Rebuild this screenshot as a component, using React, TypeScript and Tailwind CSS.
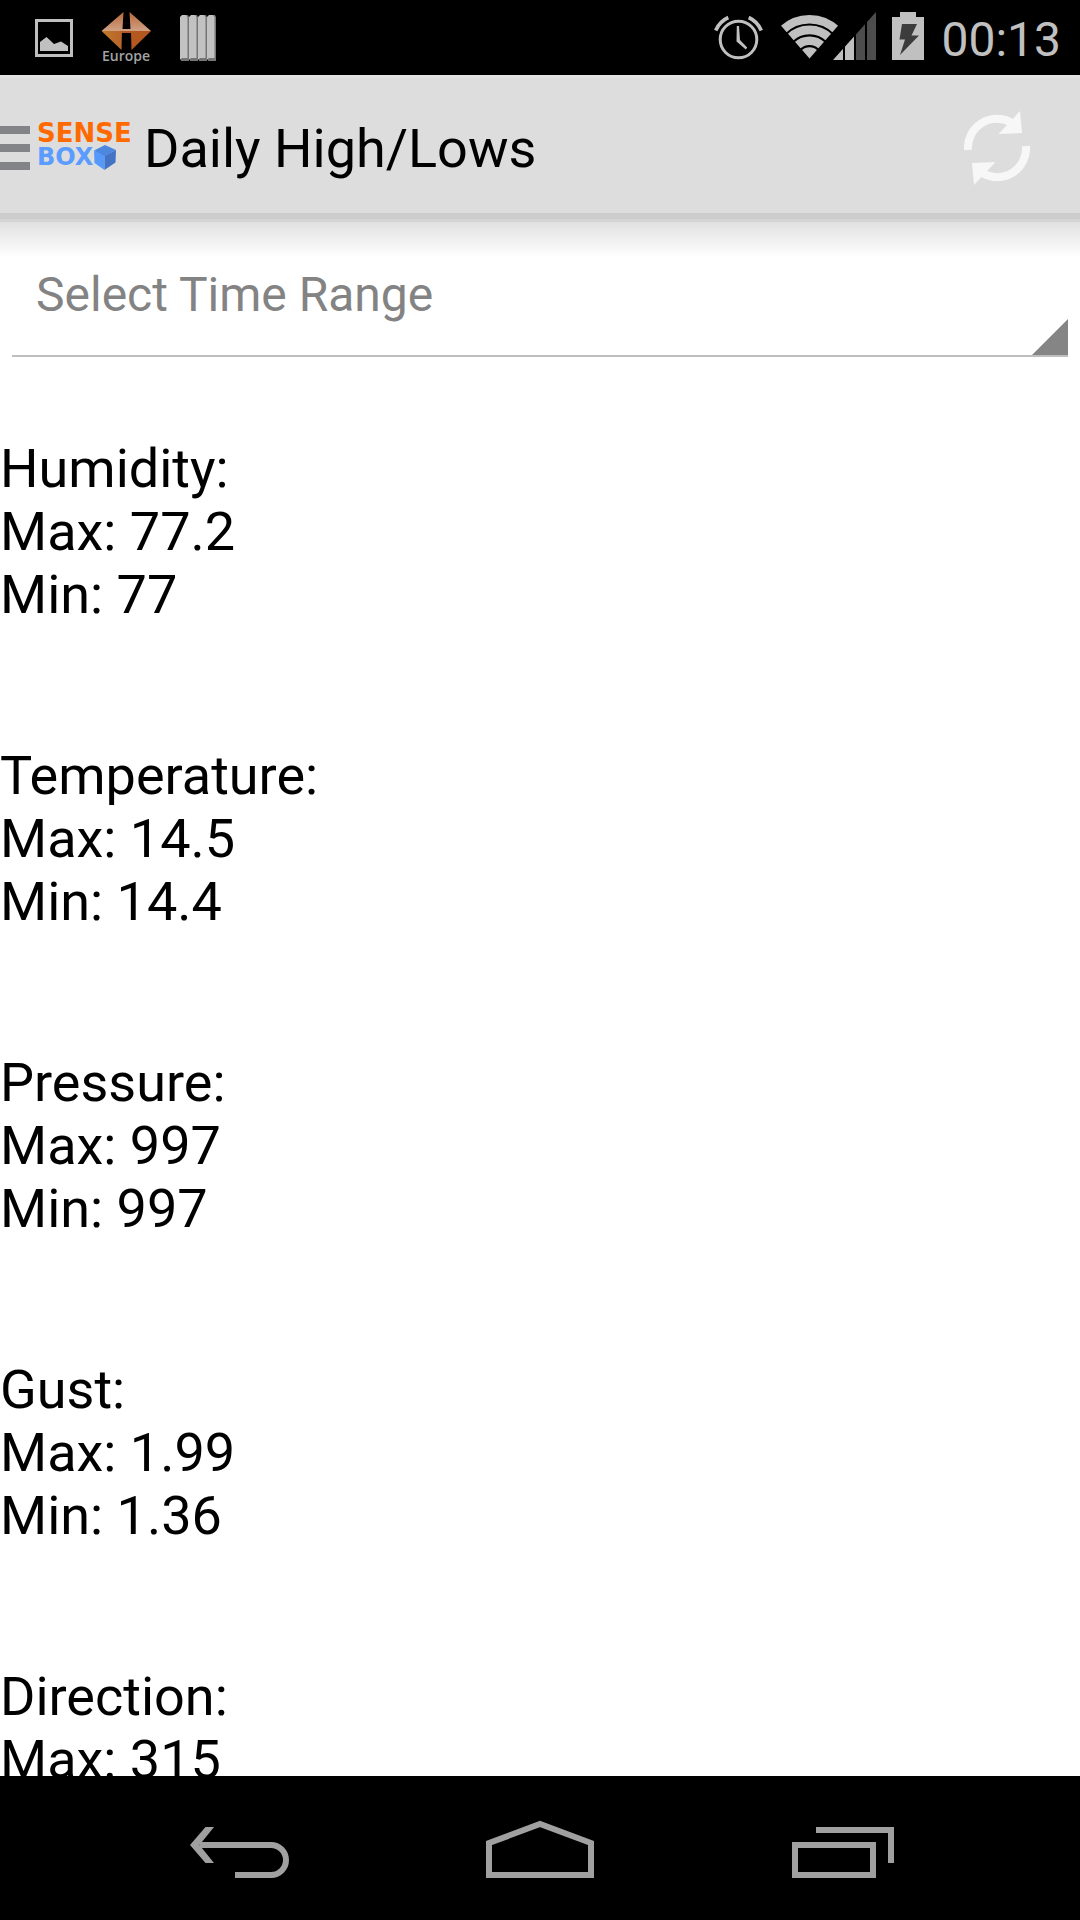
import React from "react";

const readings = [
  { name: "Humidity", values: [["Max", "77.2"], ["Min", "77"]] },
  { name: "Temperature", values: [["Max", "14.5"], ["Min", "14.4"]] },
  { name: "Pressure", values: [["Max", "997"], ["Min", "997"]] },
  { name: "Gust", values: [["Max", "1.99"], ["Min", "1.36"]] },
  { name: "Direction", values: [["Max", "315"]] },
];

function PictureIcon() {
  return (
    <svg className="h-[75px] w-[38px]" viewBox="35 0 38 75" aria-hidden="true">
      <rect x="36.5" y="20.5" width="35" height="35" fill="none" stroke="#c0c0c0" strokeWidth="3" />
      <path d="M40 51V42L46.500 37L54 44L61 41.500L68 46V51Z" fill="#c0c0c0" />
    </svg>
  );
}

function EuropeIcon() {
  return (
    <div className="flex w-[50px] flex-col items-center pt-3">
      <svg className="h-[37px] w-[50px] overflow-visible" viewBox="101 12 50 37" aria-hidden="true">
        <defs>
          <linearGradient id="topHalf" x1="0" y1="0" x2="0" y2="1">
            <stop offset="0" stopColor="#b9683a" />
            <stop offset="1" stopColor="#d0a184" />
          </linearGradient>
          <linearGradient id="lowLeft" x1="0" y1="0" x2="1" y2="0">
            <stop offset="0" stopColor="#c07a28" />
            <stop offset="1" stopColor="#b8642a" />
          </linearGradient>
        </defs>
        <path d="M101.500 31L123.500 12L122.500 29H130.500L129.500 12L151 31Z" fill="url(#topHalf)" />
        <path d="M101.500 31H122L121.500 50Z" fill="url(#lowLeft)" />
        <path d="M121 31H151L131.500 50L131 33H122Z" fill="#b4581f" />
      </svg>
      <span className="font-['Open_Sans',sans-serif] text-[14px] leading-[14px] font-semibold text-[#a3a3a3]">
        Europe
      </span>
    </div>
  );
}

function SlatsIcon() {
  return (
    <svg className="h-[75px] w-[36px]" viewBox="180 0 36 75" aria-hidden="true">
      {[180, 189, 198, 207].map((x) => (
        <g key={x}>
          <path d={`M${x + 2} 15h6l1 2v44h-8z`} fill="#757575" />
          <path d={`M${x} 17l2 -2h4l1.500 2v41h-5.500l-2 2z`} fill="#c2c2c2" />
        </g>
      ))}
    </svg>
  );
}

function AlarmIcon() {
  return (
    <svg className="h-[75px] w-[52px]" viewBox="714 0 52 75" fill="none" stroke="#c0c0c0" aria-hidden="true">
      <circle cx="738.5" cy="39.500" r="18.300" strokeWidth="3" />
      <path d="M715.700 30.500Q719.500 21.500 728.300 17.500M761.300 30.500Q757.500 21.500 748.700 17.500" strokeWidth="3.600" />
      <path d="M736.800 26H739L740 40L747.200 47.500L745.800 49.500L736.500 41.500Z" fill="#c0c0c0" stroke="none" />
    </svg>
  );
}

function NetworkIcon() {
  return (
    <svg className="h-[75px] w-[98px]" viewBox="780 0 98 75" aria-hidden="true">
      <defs>
        <clipPath id="wedge">
          <path d="M809.500 58.500L779.500 24V10H839.500V24Z" />
        </clipPath>
        <clipPath id="ramp">
          <path d="M833 60L876 12V60Z" />
        </clipPath>
      </defs>
      <g clipPath="url(#wedge)" fill="none" stroke="#c0c0c0" strokeWidth="8.600">
        <circle cx="809.500" cy="58.500" r="39.300" />
        <circle cx="809.500" cy="58.500" r="28.600" />
        <circle cx="809.500" cy="58.500" r="17.800" />
        <circle cx="809.500" cy="58.500" r="5.600" strokeWidth="11.200" />
      </g>
      <g clipPath="url(#ramp)">
        <rect x="833" y="10" width="10" height="50" fill="#c0c0c0" />
        <rect x="845" y="10" width="9" height="50" fill="#c0c0c0" />
        <rect x="856" y="10" width="9" height="50" fill="#4d4d4d" />
        <rect x="867" y="10" width="9" height="50" fill="#4d4d4d" />
      </g>
    </svg>
  );
}

function BatteryIcon() {
  return (
    <svg className="h-[75px] w-[35px]" viewBox="892 0 35 75" aria-hidden="true">
      <path d="M892 17H900V12H916V17H924V60H892Z" fill="#c0c0c0" />
      <path d="M902 24H917L911.500 35.500H919L900 55L905 39.500H899.500Z" fill="#3c3c3c" />
    </svg>
  );
}

function Logo() {
  return (
    <span className="flex w-[95px] flex-col items-start pb-1 font-['DejaVu_Sans',sans-serif] leading-[23px] font-bold">
      <span className="text-[26px] text-[#ff6a00]">SENSE</span>
      <span className="flex items-center text-[24px] text-[#5a9cff]">
        BOX
        <svg className="h-[25px] w-[24px] shrink-0" viewBox="96 144 24 25" aria-hidden="true">
          <path d="M108 144L119 149L107 155.500L97 149.500Z" fill="#4c87e0" />
          <path d="M97 149.500L107.500 155V169L97.500 162Z" fill="#5599fb" />
          <path d="M107.500 155L119 149L118.500 161.500L107.500 169Z" fill="#4273c4" />
        </svg>
      </span>
    </span>
  );
}

export default function App() {
  return (
    <div className="flex h-screen flex-col overflow-hidden bg-white font-[Roboto,sans-serif] text-black">
      <div className="flex h-[75px] shrink-0 justify-between bg-black">
        <div className="flex pl-[35px]">
          <PictureIcon />
          <div className="w-7" />
          <EuropeIcon />
          <div className="w-[29px]" />
          <SlatsIcon />
        </div>
        <div className="flex pr-[19px]">
          <AlarmIcon />
          <div className="w-[14px]" />
          <NetworkIcon />
          <div className="w-[14px]" />
          <BatteryIcon />
          <time className="ml-[14px] pt-3 text-[48px] leading-[56px] text-[#c0c0c0]">00:13</time>
        </div>
      </div>

      <header className="relative z-10 flex h-[147px] shrink-0 items-center border-t-3 border-[#e2e2e2] bg-[#ddd] pr-[50px] pb-1">
        <button type="button" aria-label="Open navigation" className="flex items-center">
          <svg className="h-[45px] w-[37px]" viewBox="0 127 37 45" fill="#838488" aria-hidden="true">
            <path d="M0 127H30V135H0ZM0 145H30V153H0ZM0 163H30V171H0Z" />
          </svg>
          <Logo />
        </button>
        <h1 className="ml-3 flex-1 text-[54px] leading-[63px]">Daily High/Lows</h1>
        <button type="button" aria-label="Refresh">
          <svg className="h-[74px] w-[66px]" viewBox="964 110 66 74" aria-hidden="true">
            <g id="refreshArrow">
              <path d="M968 149A29 29 0 0 1 1011 121.500" fill="none" stroke="#f7f7f7" strokeWidth="8" />
              <path d="M1020 110L1022 132L998.500 133Z" fill="#f7f7f7" />
            </g>
            <use href="#refreshArrow" transform="rotate(180 997 147)" />
          </svg>
        </button>
        <div className="absolute inset-x-0 bottom-0 h-[9px] border-b-3 border-[#d4d4d4] bg-[#ccc]" />
        <div className="pointer-events-none absolute inset-x-0 top-full h-[36px] bg-linear-to-b from-black/12 to-black/0" />
      </header>

      <main className="min-h-0 flex-1 overflow-y-auto [scrollbar-width:none]">
        <div className="relative mx-3 mt-[9px]">
          <select
            aria-label="Select Time Range"
            defaultValue=""
            className="block h-[126px] w-full appearance-none border-b-2 border-[#bebebe] bg-transparent pt-1 pl-6 text-[48px] leading-[56px] text-[#838383] outline-none"
          >
            <option value="">Select Time Range</option>
            <option value="day">Day</option>
          </select>
          <svg
            className="pointer-events-none absolute right-0 bottom-[2px] size-9"
            viewBox="0 0 36 36"
            fill="#858585"
            aria-hidden="true"
          >
            <path d="M36 0V36H0Z" />
          </svg>
        </div>

        <div className="flex flex-col gap-[118px] pt-20 text-[54px] leading-[63px]">
          {readings.map((r) => (
            <section key={r.name}>
              <h2>{r.name}:</h2>
              {r.values.map(([label, value]) => (
                <p key={label}>
                  {label}: {value}
                </p>
              ))}
            </section>
          ))}
        </div>
      </main>

      <nav className="grid h-36 shrink-0 grid-cols-3 bg-black px-[90px]">
        <button type="button" aria-label="Back" className="flex justify-center">
          <svg className="h-36 w-[100px]" viewBox="190 1776 100 144" aria-hidden="true">
            <path d="M200 1845H271A15 15 0 0 1 271 1875H235" fill="none" stroke="#a0a0a0" strokeWidth="6" />
            <path d="M190 1845L205.500 1827H214L199.500 1845L214 1863H205.500Z" fill="#a0a0a0" />
          </svg>
        </button>
        <button type="button" aria-label="Home" className="flex justify-center">
          <svg className="h-36 w-[108px]" viewBox="486 1776 108 144" aria-hidden="true">
            <path d="M489 1843L540 1824L591 1843V1875H489Z" fill="none" stroke="#a0a0a0" strokeWidth="6" />
          </svg>
        </button>
        <button type="button" aria-label="Recent apps" className="flex justify-center">
          <svg className="h-36 w-[108px]" viewBox="786 1776 108 144" fill="none" stroke="#a0a0a0" strokeWidth="6" aria-hidden="true">
            <path d="M795 1845H873V1875H795ZM816 1830H891V1863" />
          </svg>
        </button>
      </nav>
    </div>
  );
}
